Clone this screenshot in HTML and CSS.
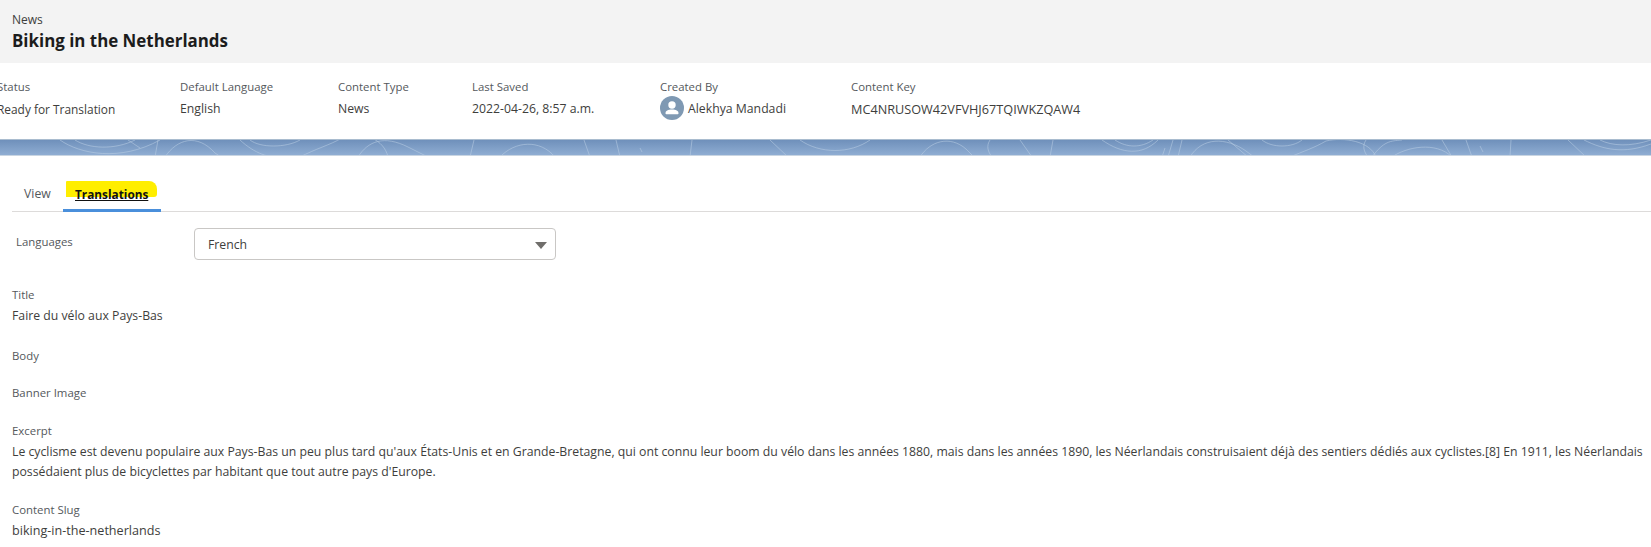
FILE: index.html
```html
<!DOCTYPE html>
<html lang="en">
<head>
<meta charset="utf-8">
<title>Biking in the Netherlands</title>
<link rel="stylesheet" href="styles.css">
</head>
<body>
<header class="page-head">
  <div class="eyebrow">News</div>
  <h1 class="page-title">Biking in the Netherlands</h1>
</header>
<section class="meta">
  <div class="meta-item"><div class="label">Status</div><div class="value status-value">Ready for Translation</div></div>
  <div class="meta-item"><div class="label">Default Language</div><div class="value">English</div></div>
  <div class="meta-item"><div class="label">Content Type</div><div class="value">News</div></div>
  <div class="meta-item"><div class="label">Last Saved</div><div class="value">2022-04-26, 8:57 a.m.</div></div>
  <div class="meta-item">
    <div class="label">Created By</div>
    <div class="value user">
      <svg class="avatar" viewBox="0 0 24 24" aria-hidden="true">
        <circle cx="12" cy="12" r="12" fill="#7f99b3"/>
        <circle cx="12" cy="9" r="3.7" fill="#fff"/>
        <path d="M5.5 17.2c0-2.4 2.6-3.6 6.5-3.6s6.5 1.2 6.5 3.6v.3c0 .5-.4.8-.8.8H6.3c-.4 0-.8-.3-.8-.8z" fill="#fff"/>
      </svg>
      <span class="user-name">Alekhya Mandadi</span>
    </div>
  </div>
  <div class="meta-item"><div class="label">Content Key</div><div class="value content-key">MC4NRUSOW42VFVHJ67TQIWKZQAW4</div></div>
</section>
<div class="banner">
  <svg class="banner-art" viewBox="0 0 1651 17" preserveAspectRatio="none" aria-hidden="true">
    <g fill="none" stroke="#b9cde4" stroke-opacity=".55" stroke-width="1">
      <path d="M60 0c20 14 60 22 100 0M75 0c14 9 40 10 60 0"/>
      <path d="M140 8l-12-8M155 17l3-17"/>
      <path d="M165 17c12-18 32-24 50-4l6 4M240 0c15 14 30 18 40 17M250 0c10 8 36 8 50 0"/>
      <path d="M300 17c15-8 30-12 42-19h30c8 4 14 10 16 19M358 17c10-16 26-22 50-10l20 10"/>
      <path d="M470 17l4-17M500 17c15-16 40-18 55 0M590 17l-6-17M620 17l-4-17M640 8l2 4M690 17l2-17"/>
      <path d="M770 0l18 17M800 0c20 14 50 14 70 0"/>
      <path d="M1102 0c20 14 40 16 56 0M1115 0c12 8 26 8 38 0M1162 17l3-9M1168 17l5-17M1178 17l4-17M1190 17c12-20 36-20 56-6l8 6M1228 0l20 17"/>
      <path d="M1262 0c10 8 30 8 40 0M1290 17c14-6 24-9 36-16 18-4 44 0 50 16M1366 0c-4 6-2 12 2 17M1372 17c12-16 18-16 30-17M1392 17c14-10 44-16 60 0M1442 0l10 17M1466 0l6 17M1480 6l3 6M1510 17l1-17"/>
      <path d="M1568 0l18 17M1584 0c20 10 40 14 67 4M1600 0c12 6 30 7 51 0"/>
      <path d="M920 17c10-16 30-22 46-8l8 8M1020 0l12 17M1050 17l3-17M990 0c-4 6-2 12 2 17"/>
    </g>
  </svg>
</div>
<main class="content">
  <nav class="tabs">
    <a class="tab">View</a>
    <a class="tab tab-active"><span class="marker"></span><span class="tab-text">Translations</span></a>
  </nav>
  <div class="lang-row">
    <div class="lang-label">Languages</div>
    <div class="select">
      <span class="select-text">French</span>
      <span class="caret"></span>
    </div>
  </div>
  <div class="field field-title"><div class="label">Title</div><div class="value field-value">Faire du vélo aux Pays-Bas</div></div>
  <div class="field field-body"><div class="label">Body</div></div>
  <div class="field field-banner"><div class="label">Banner Image</div></div>
  <div class="field field-excerpt"><div class="label">Excerpt</div><div class="value excerpt">Le cyclisme est devenu populaire aux Pays-Bas un peu plus tard qu'aux États-Unis et en Grande-Bretagne, qui ont connu leur boom du vélo dans les années 1880, mais dans les années 1890, les Néerlandais construisaient déjà des sentiers dédiés aux cyclistes.[8] En 1911, les Néerlandais possédaient plus de bicyclettes par habitant que tout autre pays d'Europe.</div></div>
  <div class="field field-slug"><div class="label">Content Slug</div><div class="value field-value slug-value">biking-in-the-netherlands</div></div>
</main>
</body>
</html>
```
FILE: styles.css
```css
* { box-sizing: border-box; }
html, body { margin: 0; padding: 0; }
body {
  width: 1651px;
  height: 547px;
  overflow: hidden;
  background: #fff;
  color: #3e3e3c;
  font-family: "Open Sans", "Noto Sans", sans-serif;
  font-size: 12.25px;
  line-height: 18px;
}
.page-head {
  height: 63px;
  background: #f3f3f3;
  padding: 11px 12px 0;
}
.eyebrow { line-height: 18px; font-size: 12px; }
.page-title {
  margin: 1px 0 0;
  font-size: 16.9px;
  line-height: 22px;
  font-weight: 700;
  color: #1c1c1c;
}
.meta {
  height: 76px;
  display: grid;
  grid-template-columns: 183px 158px 134px 188px 191px auto;
  margin-left: -3px;
  padding-top: 15px;
}
.label { color: #54585c; line-height: 18px; font-size: 11.4px; }
.value { color: #3e3e3c; line-height: 18px; margin-top: 4px; }
.status-value { font-size: 11.9px; }
.user { display: flex; align-items: center; gap: 4px; margin-top: 0; }
.user-name { padding-top: 1px; }
.content-key { font-size: 12.7px; }
.avatar { width: 24px; height: 24px; flex: none; }
.banner {
  height: 17px;
  background: linear-gradient(#6f90bb, #8fadd2);
  border-top: 1px solid #a9bccf;
  border-bottom: 1px solid #c9d5e2;
  overflow: hidden;
}
.banner-art { display: block; width: 1651px; height: 17px; }
.content { padding: 0 0 0 12px; }
.tabs {
  display: flex;
  height: 46px;
  padding-top: 19px;
  margin-top: 10px;
  border-bottom: 1px solid #dddbda;
}
.tab { padding: 0 12px; color: #54585c; line-height: 18px; }
.tab:first-child { width: 51px; }
.tab-active {
  position: relative;
  width: 98px;
  height: 27px;
  font-size: 11.8px;
  font-weight: 700;
  color: #111;
  text-decoration: underline;
  border-bottom: 3px solid #4a8fdb;
}
.tab-text { position: relative; }
.marker {
  position: absolute;
  left: 3px;
  top: -4px;
  width: 91px;
  height: 16px;
  background: #ffee00;
  border-radius: 1px 8px 3px 0;
}
.lang-row {
  display: flex;
  padding: 16px 0 0 4px;
  height: 48px;
}
.lang-label { width: 178px; line-height: 28px; color: #54585c; font-size: 11.4px; }
.select {
  width: 362px;
  height: 32px;
  border: 1px solid #c9c7c5;
  border-radius: 4px;
  padding: 0 8px 0 13px;
  display: flex;
  align-items: center;
  justify-content: space-between;
}
.select-text { padding-top: 2px; }
.caret {
  width: 0;
  height: 0;
  margin-top: 2px;
  border-left: 6px solid transparent;
  border-right: 6px solid transparent;
  border-top: 7px solid #706e6b;
}
.field-title { margin-top: 26px; }
.field-body { margin-top: 22px; }
.field-banner { margin-top: 19px; }
.field-excerpt { margin-top: 20px; }
.field-slug { margin-top: 19px; }
.field-value { margin-top: 3px; }
.slug-value { font-size: 12.6px; }
.excerpt { width: 1639px; line-height: 20px; margin-top: 2px; }
```
